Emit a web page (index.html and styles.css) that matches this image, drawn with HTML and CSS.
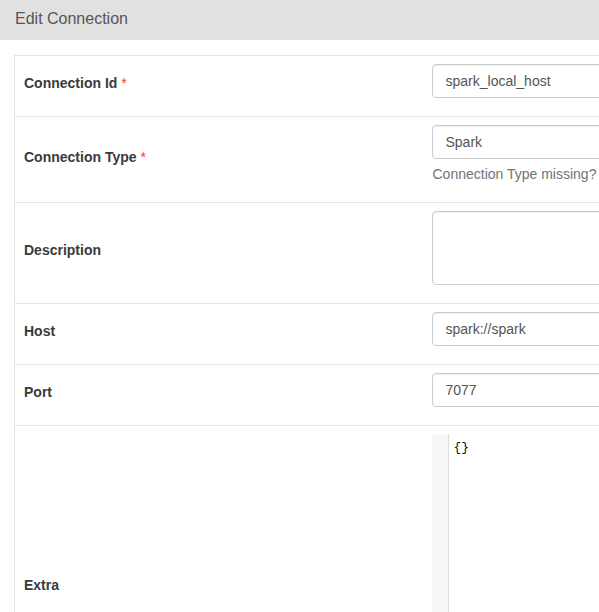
FILE: index.html
```html
<!DOCTYPE html>
<html>
<head>
<meta charset="utf-8">
<title>Edit Connection</title>
<link rel="stylesheet" href="styles.css">
</head>
<body>
<header class="page-header">
  <h4 class="page-title">Edit Connection</h4>
</header>
<main class="form-wrap">
  <table class="conn-table">
    <colgroup><col class="col-label"><col class="col-field"></colgroup>
    <tr>
      <td class="label-cell"><label class="field-label">Connection Id <span class="req">*</span></label></td>
      <td class="field-cell"><input class="form-control" type="text" value="spark_local_host"></td>
    </tr>
    <tr>
      <td class="label-cell"><label class="field-label">Connection Type <span class="req">*</span></label></td>
      <td class="field-cell">
        <div class="form-control select-box">Spark</div>
        <p class="help-block">Connection Type missing?</p>
      </td>
    </tr>
    <tr>
      <td class="label-cell"><label class="field-label">Description</label></td>
      <td class="field-cell"><textarea class="form-control textarea"></textarea></td>
    </tr>
    <tr>
      <td class="label-cell"><label class="field-label">Host</label></td>
      <td class="field-cell"><input class="form-control" type="text" value="spark://spark"></td>
    </tr>
    <tr>
      <td class="label-cell"><label class="field-label">Port</label></td>
      <td class="field-cell"><input class="form-control" type="text" value="7077"></td>
    </tr>
    <tr>
      <td class="label-cell"><label class="field-label">Extra</label></td>
      <td class="field-cell">
        <div class="code-editor">
          <div class="gutter"></div>
          <pre class="code-lines">{}</pre>
        </div>
      </td>
    </tr>
  </table>
</main>
</body>
</html>
```

FILE: styles.css
```css
html, body {
  margin: 0;
  padding: 0;
  background: #fff;
  overflow: hidden;
}

body {
  font-family: "Liberation Sans", Arial, sans-serif;
  font-size: 14px;
  line-height: 20px;
  color: #333;
  width: 599px;
  height: 612px;
}

.page-header {
  background: #e1e1e1;
  height: 40px;
  padding-left: 15px;
}

.page-title {
  margin: 0;
  font-size: 16px;
  font-weight: normal;
  line-height: 38px;
  color: #555;
}

.form-wrap {
  padding: 15px 0 0 14px;
}

.conn-table {
  border-collapse: collapse;
  table-layout: fixed;
  width: 1000px;
  border-left: 1px solid #e6e6e6;
}

.col-label {
  width: 409px;
}

.conn-table td {
  border-top: 1px solid #e6e6e6;
  padding: 8px;
  vertical-align: middle;
}

.conn-table td.label-cell {
  padding-left: 9px;
  padding-right: 7px;
}

.field-label {
  display: inline-block;
  margin-bottom: 6px;
  font-weight: bold;
  color: #3a3a3a;
}

.req {
  color: #e8433a;
  font-weight: normal;
}

.form-control {
  display: block;
  box-sizing: border-box;
  width: 100%;
  height: 34px;
  margin: 0 0 10px 0;
  padding: 6px 12px 6px 13px;
  font-family: "Liberation Sans", Arial, sans-serif;
  font-size: 14px;
  line-height: 20px;
  color: #555;
  background: #fff;
  border: 1px solid #ccc;
  border-radius: 4px;
  box-shadow: inset 0 1px 1px rgba(0, 0, 0, 0.075);
  outline: none;
}

.select-box {
  margin-bottom: 0;
}

.textarea {
  height: 74px;
  resize: none;
}

.help-block {
  margin: 5px 0 10px 1px;
  color: #737373;
}

.code-editor {
  display: flex;
  height: 298px;
  margin-bottom: 10px;
  background: #fff;
}

.gutter {
  width: 16px;
  background: #f7f7f7;
  border-right: 1px solid #ddd;
}

.code-lines {
  margin: 0;
  padding: 5px 5px 0 5px;
  font-family: "Liberation Mono", "DejaVu Sans Mono", monospace;
  font-size: 13px;
  line-height: 17px;
  color: #111;
}
```
